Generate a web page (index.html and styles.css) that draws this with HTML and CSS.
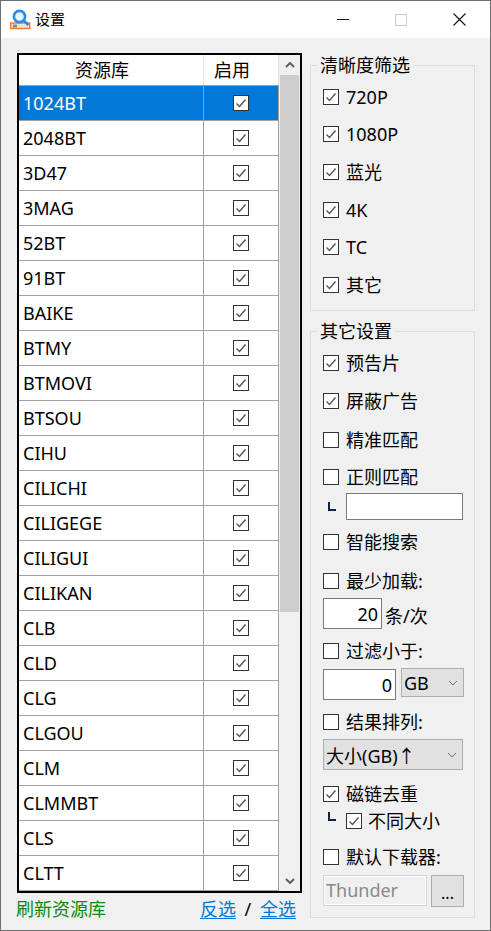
FILE: index.html
```html
<!DOCTYPE html>
<html lang="zh-CN">
<head>
  <meta charset="UTF-8"/>
  <title>设置</title>
  <link rel="stylesheet" href="styles.css">
</head>
<body>
  <svg class="defs" width="0" height="0">
    <symbol id="tick" viewBox="0 0 14 14">
      <path d="M2.5 7.5 5.5 10.5 11.5 3.5" fill="none" stroke="#555" stroke-width="1.4"/>
    </symbol>
    <symbol id="chev" viewBox="0 0 10 6">
      <path d="M1 1 5 5 9 1" fill="none" stroke="#707070" stroke-width="1"/>
    </symbol>
    <symbol id="arrow" viewBox="0 0 10 6">
      <path d="M1 1 5 5 9 1" fill="none" stroke="#606060" stroke-width="2"/>
    </symbol>
  </svg>

  <div class="window">
    <header class="titlebar">
      <svg class="app-icon" width="22" height="22" viewBox="0 0 22 22">
        <rect x="0.7" y="15" width="19" height="5.5" fill="#f0e2d6" stroke="#f07a30" stroke-width="1.4"/>
        <rect x="3" y="16.5" width="4" height="3" fill="#8a8a8a"/>
        <circle cx="9.5" cy="8.5" r="5.6" fill="#e8f4ff" stroke="#2a8be8" stroke-width="2.6"/>
        <path d="M13.5 12.5 18.5 17" stroke="#2a8be8" stroke-width="3"/>
      </svg>
      <span class="title">设置</span>
      <div class="caption">
        <span class="cap-btn"><i class="cap-min"></i></span>
        <span class="cap-btn"><i class="cap-max"></i></span>
        <span class="cap-btn cap-close">
          <svg width="13" height="13" viewBox="0 0 13 13"><path d="M.5.5 12.5 12.5M12.5.5.5 12.5" stroke="#111" stroke-width="1.1"/></svg>
        </span>
      </div>
    </header>

    <main class="content">
      <section class="left">
        <div class="grid">
          <div class="rows">
            <div class="row head"><div class="c1">资源库</div><div class="c2">启用</div></div>
            <div class="row selected"><div class="c1">1024BT</div><div class="c2"><span class="box"><svg><use href="#tick"/></svg></span></div></div>
            <div class="row"><div class="c1">2048BT</div><div class="c2"><span class="box"><svg><use href="#tick"/></svg></span></div></div>
            <div class="row"><div class="c1">3D47</div><div class="c2"><span class="box"><svg><use href="#tick"/></svg></span></div></div>
            <div class="row"><div class="c1">3MAG</div><div class="c2"><span class="box"><svg><use href="#tick"/></svg></span></div></div>
            <div class="row"><div class="c1">52BT</div><div class="c2"><span class="box"><svg><use href="#tick"/></svg></span></div></div>
            <div class="row"><div class="c1">91BT</div><div class="c2"><span class="box"><svg><use href="#tick"/></svg></span></div></div>
            <div class="row"><div class="c1">BAIKE</div><div class="c2"><span class="box"><svg><use href="#tick"/></svg></span></div></div>
            <div class="row"><div class="c1">BTMY</div><div class="c2"><span class="box"><svg><use href="#tick"/></svg></span></div></div>
            <div class="row"><div class="c1">BTMOVI</div><div class="c2"><span class="box"><svg><use href="#tick"/></svg></span></div></div>
            <div class="row"><div class="c1">BTSOU</div><div class="c2"><span class="box"><svg><use href="#tick"/></svg></span></div></div>
            <div class="row"><div class="c1">CIHU</div><div class="c2"><span class="box"><svg><use href="#tick"/></svg></span></div></div>
            <div class="row"><div class="c1">CILICHI</div><div class="c2"><span class="box"><svg><use href="#tick"/></svg></span></div></div>
            <div class="row"><div class="c1">CILIGEGE</div><div class="c2"><span class="box"><svg><use href="#tick"/></svg></span></div></div>
            <div class="row"><div class="c1">CILIGUI</div><div class="c2"><span class="box"><svg><use href="#tick"/></svg></span></div></div>
            <div class="row"><div class="c1">CILIKAN</div><div class="c2"><span class="box"><svg><use href="#tick"/></svg></span></div></div>
            <div class="row"><div class="c1">CLB</div><div class="c2"><span class="box"><svg><use href="#tick"/></svg></span></div></div>
            <div class="row"><div class="c1">CLD</div><div class="c2"><span class="box"><svg><use href="#tick"/></svg></span></div></div>
            <div class="row"><div class="c1">CLG</div><div class="c2"><span class="box"><svg><use href="#tick"/></svg></span></div></div>
            <div class="row"><div class="c1">CLGOU</div><div class="c2"><span class="box"><svg><use href="#tick"/></svg></span></div></div>
            <div class="row"><div class="c1">CLM</div><div class="c2"><span class="box"><svg><use href="#tick"/></svg></span></div></div>
            <div class="row"><div class="c1">CLMMBT</div><div class="c2"><span class="box"><svg><use href="#tick"/></svg></span></div></div>
            <div class="row"><div class="c1">CLS</div><div class="c2"><span class="box"><svg><use href="#tick"/></svg></span></div></div>
            <div class="row"><div class="c1">CLTT</div><div class="c2"><span class="box"><svg><use href="#tick"/></svg></span></div></div>
          </div>
          <div class="scrollbar">
            <div class="sb-btn"><svg class="flip"><use href="#arrow"/></svg></div>
            <div class="sb-thumb"></div>
            <div class="sb-track"></div>
            <div class="sb-btn"><svg><use href="#arrow"/></svg></div>
          </div>
        </div>
        <div class="links">
          <a class="refresh">刷新资源库</a>
          <span class="pick"><a>反选</a> <i>/</i> <a>全选</a></span>
        </div>
      </section>

      <section class="right">
        <fieldset class="quality">
          <legend>清晰度筛选</legend>
          <label class="check"><span class="box"><svg><use href="#tick"/></svg></span>720P</label>
          <label class="check"><span class="box"><svg><use href="#tick"/></svg></span>1080P</label>
          <label class="check"><span class="box"><svg><use href="#tick"/></svg></span>蓝光</label>
          <label class="check"><span class="box"><svg><use href="#tick"/></svg></span>4K</label>
          <label class="check"><span class="box"><svg><use href="#tick"/></svg></span>TC</label>
          <label class="check"><span class="box"><svg><use href="#tick"/></svg></span>其它</label>
        </fieldset>

        <fieldset class="other">
          <legend>其它设置</legend>
          <label class="check"><span class="box"><svg><use href="#tick"/></svg></span>预告片</label>
          <label class="check mt14"><span class="box"><svg><use href="#tick"/></svg></span>屏蔽广告</label>
          <label class="check mt15"><span class="box"></span>精准匹配</label>
          <label class="check mt13"><span class="box"></span>正则匹配</label>
          <div class="sub regex"><i class="corner"></i><input class="field regex-input" type="text"/></div>
          <label class="check mt10"><span class="box"></span>智能搜索</label>
          <label class="check mt15"><span class="box"></span>最少加载:</label>
          <div class="sub load"><input class="field num load-input" type="text" value="20"/><span class="unit">条/次</span></div>
          <label class="check mt10"><span class="box"></span>过滤小于:</label>
          <div class="sub size"><input class="field num size-input" type="text" value="0"/><div class="select unit-select">GB<svg><use href="#chev"/></svg></div></div>
          <label class="check mt10"><span class="box"></span>结果排列:</label>
          <div class="select sort-select">大小(GB)↑<svg><use href="#chev"/></svg></div>
          <label class="check mt12"><span class="box"><svg><use href="#tick"/></svg></span>磁链去重</label>
          <div class="sub dedupe"><i class="corner"></i><label class="check"><span class="box"><svg><use href="#tick"/></svg></span>不同大小</label></div>
          <label class="check mt12"><span class="box"></span>默认下载器:</label>
          <div class="sub path"><input class="field path-input" type="text" value="Thunder" disabled/><button class="browse">...</button></div>
        </fieldset>
      </section>
    </main>
  </div>
</body>
</html>
```

FILE: styles.css
```css
*{box-sizing:border-box;margin:0;padding:0;}
html,body{height:100%;}
body{font-family:'Noto Sans','Noto Sans CJK SC',sans-serif;font-size:18px;color:#000;background:#f0f0f0;}
.defs{position:absolute;}
.window{width:491px;height:931px;border:1px solid #6e6e6e;display:flex;flex-direction:column;background:#f0f0f0;overflow:hidden;}

/* title bar */
.titlebar{height:37px;background:#fff;display:flex;align-items:center;padding-left:9px;}
.app-icon{margin-top:-2px;}
.title{font-size:15px;line-height:37px;margin-left:3px;}
.caption{margin-left:auto;margin-right:1px;display:flex;}
.cap-btn{width:58px;height:37px;display:flex;align-items:center;justify-content:center;}
.cap-close{width:59px;}
.cap-min{width:12px;height:1px;background:#111;}
.cap-max{width:12px;height:12px;border:1px solid #ccc;}

.content{display:flex;padding:15px 0 0 16px;gap:8px;}
.left{width:285px;}
.right{width:165px;}

/* source table */
.grid{height:840px;border:2px solid #000;display:flex;background:#fff;}
.rows{width:260px;}
.row{display:flex;height:35px;border-bottom:1px solid #a0a0a0;line-height:34px;}
.row.head{height:31px;line-height:30px;}
.c1{width:185px;padding-left:4px;border-right:1px solid #a0a0a0;}
.c2{width:75px;border-right:1px solid #a0a0a0;display:flex;align-items:center;justify-content:center;}
.head .c1,.head .c2{text-align:center;justify-content:center;border-right-color:#e4e4e4;padding:0 18px 0 0;}
.selected{background:#0078d7;color:#fff;}

.scrollbar{width:21px;display:flex;flex-direction:column;background:#f0f0f0;}
.sb-btn{height:20px;display:flex;align-items:center;justify-content:center;}
.sb-btn svg{display:block;width:10px;height:6px;}
.sb-btn .flip{transform:rotate(180deg);}
.sb-thumb{height:537px;margin-left:1px;margin-right:1px;background:#cdcdcd;}
.sb-track{flex:1;}

/* links under the table */
.links{display:flex;justify-content:space-between;margin:4px 6px 0 -1px;line-height:24px;}
.refresh{color:#0a8a0a;}
.pick a{color:#0078d7;text-decoration:underline;text-underline-offset:2px;}
.pick i{font-style:normal;margin:0 4px;}

/* checkboxes */
.box{width:16px;height:16px;flex:none;border:1px solid #333;background:#fff;display:inline-block;}
.box svg{display:block;width:14px;height:14px;}
.check{display:flex;align-items:center;gap:7px;height:24px;line-height:24px;}

/* option groups */
fieldset{border:1px solid #dcdcdc;padding:0 0 0 12px;}
legend{margin-left:-6px;padding:0 3px;line-height:24px;}
.quality{height:258px;margin-bottom:8px;padding-top:1px;}
.quality .check{height:37.6px;}
.other{height:599px;padding-top:8px;}
.mt10{margin-top:10px;}
.mt12{margin-top:12px;}
.mt13{margin-top:13px;}
.mt14{margin-top:14px;}
.mt15{margin-top:15px;}

.sub{display:flex;align-items:flex-start;}
.corner{width:8px;height:9px;margin:0 10px 0 5px;border-left:2px solid #102040;border-bottom:2px solid #102040;flex:none;}
.regex{margin-top:4px;align-items:center;}
.regex .corner{margin-top:-1px;}
.dedupe{margin-top:3px;}
.dedupe .corner{margin-top:3px;}
.dedupe .check{gap:6px;}
.load{margin-top:5px;}
.size{margin-top:6px;}
.path{margin-top:6px;gap:4px;}

.field{font:inherit;border:1px solid #7a7a7a;background:#fff;color:#000;padding:0 3px;outline:none;}
.num{text-align:right;}
.regex-input{width:117px;height:27px;}
.load-input{width:59px;height:31px;}
.unit{margin:5px 0 0 3px;line-height:26px;}
.size-input{width:73px;height:31px;}
.path-input{width:104px;height:31px;padding:0 2px 2px;border-color:#d4d4d4;background:#f0f0f0;color:#8a8a8a;box-shadow:inset 0 0 0 1px #fff;}

.select{background:#e1e1e1;border:1px solid #adadad;display:flex;align-items:center;justify-content:space-between;padding:0 2px;}
.unit-select{width:63px;height:29px;margin-left:5px;margin-top:-1px;}
.sort-select{width:140px;height:31px;margin-top:5px;}
.select svg{width:10px;height:6px;margin-right:3px;}

.browse{width:33px;height:32px;font:inherit;font-size:16px;padding-top:4px;background:#e1e1e1;border:1px solid #adadad;color:#000;}
```
